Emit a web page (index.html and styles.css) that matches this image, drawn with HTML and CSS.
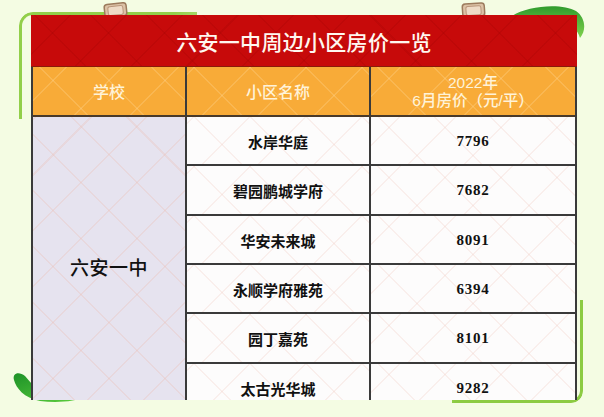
FILE: index.html
```html
<!DOCTYPE html>
<html lang="zh">
<head>
<meta charset="utf-8">
<title>六安一中周边小区房价一览</title>
<link rel="stylesheet" href="styles.css">
</head>
<body>
<div class="page">
  <div class="deco frame-tl"></div>
  <div class="deco frame-br"></div>
  <svg class="deco leaf-tr" width="80" height="40" viewBox="0 0 80 40">
    <defs>
      <linearGradient id="lg1" x1="0" y1="0" x2="0" y2="1">
        <stop offset="0" stop-color="#2f9b2c"/>
        <stop offset="1" stop-color="#7fd24e"/>
      </linearGradient>
    </defs>
    <path d="M4 12 C 20 1, 55 -1, 68 7 C 77 13, 79 26, 72 34 C 70 26, 62 18, 50 16 C 30 14, 14 16, 4 12 Z" fill="url(#lg1)"/>
  </svg>
  <svg class="deco leaf-bl" width="80" height="36" viewBox="0 0 80 36">
    <defs>
      <linearGradient id="lg2" x1="0" y1="0" x2="1" y2="1">
        <stop offset="0" stop-color="#1d9228"/>
        <stop offset="1" stop-color="#5fd03e"/>
      </linearGradient>
    </defs>
    <path d="M4 10 C 2 3, 9 1, 15 6 C 22 14, 28 22, 40 24 C 55 26, 68 26, 76 26 C 66 32, 46 33, 30 31 C 14 28, 6 18, 4 10 Z" fill="url(#lg2)"/>
  </svg>
  <svg class="deco clip clip-l" width="26" height="16" viewBox="0 0 26 16">
    <rect x="1.5" y="1.5" width="22" height="13" rx="3" fill="#dcc2a6" stroke="#9c7b5d" stroke-width="1.5"/>
    <rect x="5" y="4" width="15" height="9" rx="2" fill="#eedbc6" stroke="#b8967a" stroke-width="1"/>
  </svg>
  <svg class="deco clip clip-r" width="26" height="16" viewBox="0 0 26 16">
    <rect x="1.5" y="1.5" width="22" height="13" rx="3" fill="#dcc2a6" stroke="#9c7b5d" stroke-width="1.5"/>
    <rect x="5" y="4" width="15" height="9" rx="2" fill="#eedbc6" stroke="#b8967a" stroke-width="1"/>
  </svg>

  <div class="sheet">
    <div class="title">六安一中周边小区房价一览</div>
    <div class="grid">
      <div class="th">学校</div>
      <div class="th">小区名称</div>
      <div class="th th-last"><span class="th-line">2022年</span><span class="th-line">6月房价（元/平）</span></div>

      <div class="school">六安一中</div>

      <div class="name">水岸华庭</div>
      <div class="price">7796</div>
      <div class="name">碧园鹏城学府</div>
      <div class="price">7682</div>
      <div class="name">华安未来城</div>
      <div class="price">8091</div>
      <div class="name">永顺学府雅苑</div>
      <div class="price">6394</div>
      <div class="name">园丁嘉苑</div>
      <div class="price">8101</div>
      <div class="name">太古光华城</div>
      <div class="price">9282</div>
    </div>
  </div>
</div>
</body>
</html>
```

FILE: styles.css
```css
html, body {
  margin: 0;
  padding: 0;
  background: #f4fce3;
}

.page {
  position: relative;
  width: 604px;
  height: 417px;
  overflow: hidden;
  box-sizing: border-box;
  padding: 15px 0 0 31px;
  font-family: "Noto Sans CJK SC", "Noto Sans", sans-serif;
}

.deco {
  position: absolute;
  z-index: 0;
}

.frame-tl {
  left: 19px;
  top: 12px;
  width: 175px;
  height: 104px;
  border-left: 3px solid #92cf4a;
  border-top: 3px solid #92cf4a;
  border-top-left-radius: 14px;
  -webkit-mask-image: linear-gradient(135deg, #000 55%, transparent 100%);
  mask-image: linear-gradient(135deg, #000 55%, transparent 100%);
}

.frame-br {
  left: 452px;
  top: 300px;
  width: 128px;
  height: 100px;
  border-right: 3px solid #8ccb42;
  border-bottom: 3px solid #8ccb42;
  border-bottom-right-radius: 12px;
  -webkit-mask-image: linear-gradient(315deg, #000 55%, transparent 100%);
  mask-image: linear-gradient(315deg, #000 55%, transparent 100%);
}

.leaf-tr {
  left: 508px;
  top: 4px;
}

.leaf-bl {
  left: 10px;
  top: 370px;
}

.clip-l {
  left: 103px;
  top: 2px;
  transform: rotate(-6deg);
}

.clip-r {
  left: 461px;
  top: 2px;
  transform: rotate(-4deg);
}

.sheet {
  position: relative;
  z-index: 1;
  width: 546px;
  height: 385px;
  overflow: hidden;
}

.title {
  height: 52px;
  display: flex;
  align-items: center;
  justify-content: center;
  color: #fff8f0;
  font-size: 21px;
  font-weight: 500;
  letter-spacing: 0.3px;
  background:
    repeating-linear-gradient(45deg, transparent 0 38px, rgba(150, 0, 0, 0.18) 38px 39.5px),
    repeating-linear-gradient(-45deg, transparent 0 38px, rgba(150, 0, 0, 0.18) 38px 39.5px),
    #c70a0a;
  border-bottom: 1px solid #8a1a0a;
  box-sizing: border-box;
}

.grid {
  display: grid;
  grid-template-columns: 154px 184px 204px;
  grid-template-rows: 50px 49px 50px 49px 49px 50px 49px;
  border-left: 2px solid #3a3a3a;
  border-right: 2px solid #3a3a3a;
}

.grid > div {
  box-sizing: border-box;
  display: flex;
  align-items: center;
  justify-content: center;
  text-align: center;
}

.th {
  background:
    repeating-linear-gradient(45deg, transparent 0 38px, rgba(255, 220, 160, 0.25) 38px 39.5px),
    repeating-linear-gradient(-45deg, transparent 0 38px, rgba(255, 220, 160, 0.25) 38px 39.5px),
    #f8ab38;
  color: #fff3d8;
  font-size: 16px;
  font-weight: 500;
  border-bottom: 2px solid #4a3a2a;
  border-right: 2px solid #3a3a3a;
}

.grid > .th-last {
  flex-direction: column;
  border-right: none;
  padding-top: 1px;
}

.th-line {
  display: block;
  height: 18px;
  line-height: 18px;
  font-family: "Liberation Sans", "Noto Sans CJK SC", sans-serif;
  font-size: 15.5px;
}

.school {
  grid-column: 1;
  grid-row: 2 / span 6;
  background:
    repeating-linear-gradient(45deg, transparent 0 38px, rgba(235, 190, 180, 0.3) 38px 39.5px),
    repeating-linear-gradient(-45deg, transparent 0 38px, rgba(235, 190, 180, 0.3) 38px 39.5px),
    #e6e3ef;
  border-right: 2px solid #3a3a3a;
  color: #111;
  font-size: 19px;
  font-weight: 500;
  letter-spacing: 0.5px;
  padding-top: 2px;
}

.name,
.price {
  background:
    repeating-linear-gradient(45deg, transparent 0 38px, rgba(240, 200, 190, 0.25) 38px 39.5px),
    repeating-linear-gradient(-45deg, transparent 0 38px, rgba(240, 200, 190, 0.25) 38px 39.5px),
    #fdfcfc;
  border-bottom: 2px solid #3a3a3a;
  color: #111;
}

.name {
  grid-column: 2;
  border-right: 2px solid #3a3a3a;
  font-size: 15px;
  font-weight: 700;
  padding-top: 1px;
}

.price {
  grid-column: 3;
  font-family: "Liberation Serif", "DejaVu Serif", serif;
  font-weight: 700;
  font-size: 15px;
  letter-spacing: 0.8px;
  padding-top: 1px;
}
```
